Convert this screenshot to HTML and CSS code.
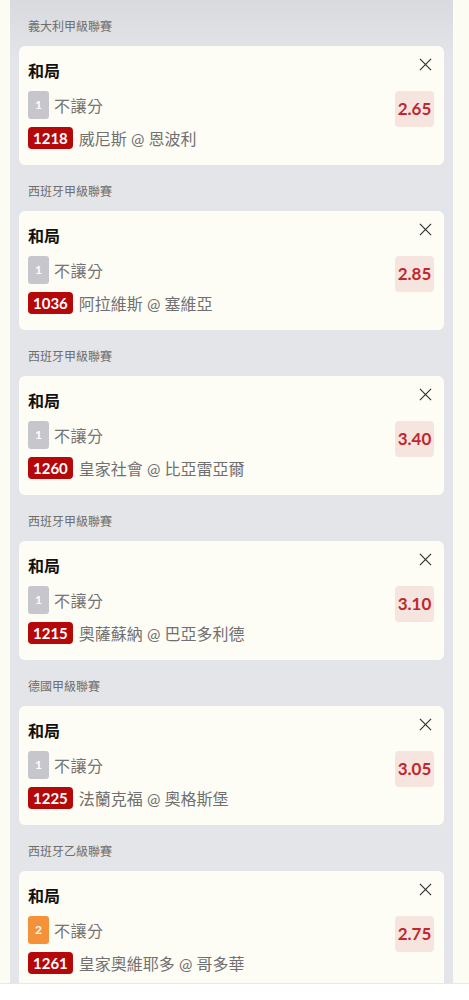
FILE: index.html
```html
<!DOCTYPE html>
<html lang="zh-Hant">
<head>
  <meta charset="UTF-8" />
  <meta name="viewport" content="width=device-width, initial-scale=1.0" />
  <title>投注單</title>
  <link rel="stylesheet" href="styles.css">
</head>
<body>

  <!-- 投注列表 -->
  <div class="slip">

    <div class="group">
      <div class="league">義大利甲級聯賽</div>
      <div class="card">
        <div class="pick">和局</div>
        <button class="close"><svg viewBox="0 0 14 14"><path d="M1 1L13 13M13 1L1 13" /></svg></button>
        <div class="body">
          <div class="info">
            <div class="row"><span class="num">1</span><span class="market">不讓分</span></div>
            <div class="row"><span class="code">1218</span><span class="match">威尼斯 @ 恩波利</span></div>
          </div>
          <div class="odds">2.65</div>
        </div>
      </div>
    </div>

    <div class="group">
      <div class="league">西班牙甲級聯賽</div>
      <div class="card">
        <div class="pick">和局</div>
        <button class="close"><svg viewBox="0 0 14 14"><path d="M1 1L13 13M13 1L1 13" /></svg></button>
        <div class="body">
          <div class="info">
            <div class="row"><span class="num">1</span><span class="market">不讓分</span></div>
            <div class="row"><span class="code">1036</span><span class="match">阿拉維斯 @ 塞維亞</span></div>
          </div>
          <div class="odds">2.85</div>
        </div>
      </div>
    </div>

    <div class="group">
      <div class="league">西班牙甲級聯賽</div>
      <div class="card">
        <div class="pick">和局</div>
        <button class="close"><svg viewBox="0 0 14 14"><path d="M1 1L13 13M13 1L1 13" /></svg></button>
        <div class="body">
          <div class="info">
            <div class="row"><span class="num">1</span><span class="market">不讓分</span></div>
            <div class="row"><span class="code">1260</span><span class="match">皇家社會 @ 比亞雷亞爾</span></div>
          </div>
          <div class="odds">3.40</div>
        </div>
      </div>
    </div>

    <div class="group">
      <div class="league">西班牙甲級聯賽</div>
      <div class="card">
        <div class="pick">和局</div>
        <button class="close"><svg viewBox="0 0 14 14"><path d="M1 1L13 13M13 1L1 13" /></svg></button>
        <div class="body">
          <div class="info">
            <div class="row"><span class="num">1</span><span class="market">不讓分</span></div>
            <div class="row"><span class="code">1215</span><span class="match">奧薩蘇納 @ 巴亞多利德</span></div>
          </div>
          <div class="odds">3.10</div>
        </div>
      </div>
    </div>

    <div class="group">
      <div class="league">德國甲級聯賽</div>
      <div class="card">
        <div class="pick">和局</div>
        <button class="close"><svg viewBox="0 0 14 14"><path d="M1 1L13 13M13 1L1 13" /></svg></button>
        <div class="body">
          <div class="info">
            <div class="row"><span class="num">1</span><span class="market">不讓分</span></div>
            <div class="row"><span class="code">1225</span><span class="match">法蘭克福 @ 奧格斯堡</span></div>
          </div>
          <div class="odds">3.05</div>
        </div>
      </div>
    </div>

    <div class="group">
      <div class="league">西班牙乙級聯賽</div>
      <div class="card">
        <div class="pick">和局</div>
        <button class="close"><svg viewBox="0 0 14 14"><path d="M1 1L13 13M13 1L1 13" /></svg></button>
        <div class="body">
          <div class="info">
            <div class="row"><span class="num num-2">2</span><span class="market">不讓分</span></div>
            <div class="row"><span class="code">1261</span><span class="match">皇家奧維耶多 @ 哥多華</span></div>
          </div>
          <div class="odds">2.75</div>
        </div>
      </div>
    </div>

  </div>

  <!-- 底部欄 -->
  <div class="footer"></div>

</body>
</html>
```

FILE: styles.css
```css
* {
  box-sizing: border-box;
}
body, html {
  margin: 0;
  padding: 0;
  height: 100%;
  overflow: hidden;
}
body {
  background: #fcfcf2;
  font-family: Lato, "Noto Sans CJK TC", sans-serif;
}
.slip {
  width: 443px;
  margin-left: 10px;
  min-height: 100%;
  padding: 0 9px;
  background: linear-gradient(to bottom, #d9dadd 0, #e4e5e8 60px, #e4e5e8 100%);
}
.group {
  padding-top: 18px;
}
.league {
  height: 18px;
  line-height: 18px;
  font-size: 12px;
  color: #6e6e6e;
  padding-left: 9px;
  margin-bottom: 10px;
}
.card {
  position: relative;
  height: 119px;
  background: #fefdf5;
  border-radius: 6px;
  padding: 14px 10px 0 9px;
}
.pick {
  height: 22px;
  line-height: 22px;
  font-size: 16px;
  font-weight: bold;
  color: #111;
}
.close {
  position: absolute;
  top: 12px;
  right: 11px;
  width: 15px;
  height: 13px;
  padding: 0;
  border: none;
  background: none;
  cursor: pointer;
}
.close svg {
  display: block;
  width: 15px;
  height: 13px;
}
.close path {
  stroke: #333;
  stroke-width: 1.3;
  fill: none;
}
.body {
  display: flex;
  justify-content: space-between;
  align-items: flex-start;
  margin-top: 9px;
}
.info {
  display: flex;
  flex-direction: column;
  gap: 7px;
}
.row {
  display: flex;
  align-items: center;
}
.num {
  width: 21px;
  height: 28px;
  line-height: 28px;
  border-radius: 3px;
  background: #c6c6cc;
  color: #fff;
  font-size: 12px;
  font-weight: bold;
  text-align: center;
}
.num-2 {
  background: #f4923a;
}
.market {
  margin-left: 5px;
  font-size: 16px;
  letter-spacing: 0.5px;
  color: #747474;
}
.code {
  height: 22px;
  line-height: 22px;
  padding: 0 5px;
  border-radius: 4px;
  background: #b50808;
  color: #fff;
  font-size: 15px;
  font-weight: bold;
}
.match {
  margin-left: 6px;
  font-size: 16px;
  color: #707070;
}
.odds {
  width: 39px;
  height: 36px;
  line-height: 36px;
  border-radius: 4px;
  background: #f6e4df;
  color: #c1272d;
  font-size: 17px;
  font-weight: bold;
  text-align: center;
}
.footer {
  position: fixed;
  left: 0;
  right: 0;
  bottom: 0;
  height: 17px;
  background: #fff;
  border-top: 1px solid #e8e8e8;
}
```
